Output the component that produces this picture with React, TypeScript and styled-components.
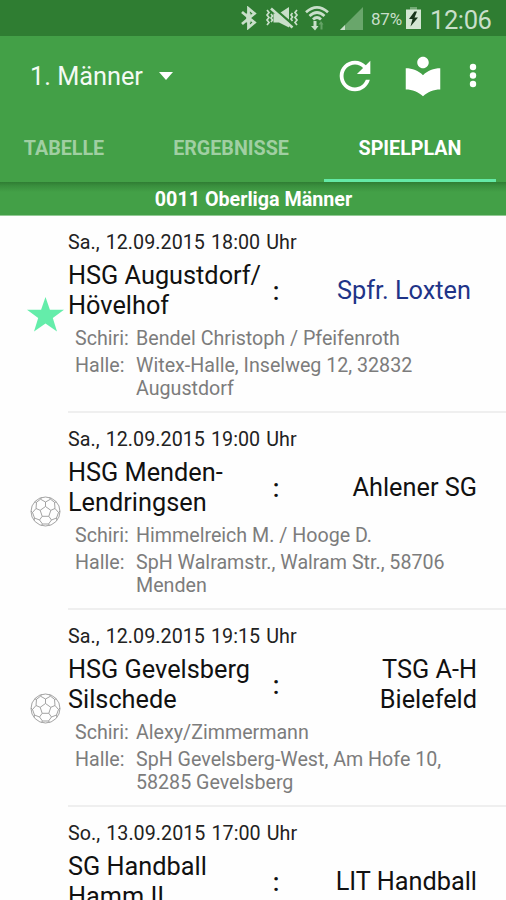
import React from "react";
import styled, { createGlobalStyle } from "styled-components";

const GlobalStyle = createGlobalStyle`
  * { box-sizing: border-box; }
  body {
    margin: 0;
    background: #fefefe;
    font-family: Roboto, "Liberation Sans", sans-serif;
    overflow: hidden;
  }
  svg { display: block; flex: none; }
`;

const Screen = styled.div`
  width: 506px;
  height: 900px;
  overflow: hidden;
  display: flex;
  flex-direction: column;
`;

const StatusBar = styled.div`
  flex: none;
  height: 36px;
  padding-left: 240px;
  background: #2f7d32;
  color: #c9dfca;
  display: flex;
  align-items: center;
`;

const BatteryText = styled.span`
  width: 35px;
  margin-left: 8px;
  padding-top: 2px;
  font-size: 17px;
  letter-spacing: -0.2px;
  white-space: nowrap;
`;

const Clock = styled.span`
  margin-left: 9px;
  padding-top: 3px;
  font-size: 25.5px;
  letter-spacing: -0.4px;
  line-height: 30px;
`;

const AppBar = styled.header`
  flex: none;
  height: 146px;
  background: #43a047;
  color: #fff;
  display: flex;
  flex-direction: column;
`;

const Toolbar = styled.div`
  flex: none;
  height: 79px;
  padding-left: 30px;
  display: flex;
  align-items: center;
`;

const TeamPicker = styled.div`
  width: 302px;
  padding-top: 1px;
  display: flex;
  align-items: center;
  gap: 16px;
  font-size: 25.3px;
  color: #f4faf4;
`;

const ToolButton = styled.div<{ $gap?: number }>`
  margin-left: ${(p) => p.$gap ?? 0}px;
`;

const Tabs = styled.nav`
  flex: 1;
  display: grid;
  grid-template-columns: 128px 196px 172px;
`;

const Tab = styled.div<{ $active?: boolean; $shift?: number }>`
  display: flex;
  align-items: center;
  justify-content: center;
  padding-top: 3px;
  padding-left: ${(p) => p.$shift ?? 0}px;
  font-size: 19.7px;
  font-weight: 700;
  color: ${(p) => (p.$active ? "#fff" : "#a0cfa2")};
  border-bottom: 3px solid ${(p) => (p.$active ? "#64e9a6" : "transparent")};
`;

const LeagueBar = styled.div`
  flex: none;
  height: 34px;
  padding: 2px 0 0 1px;
  background: linear-gradient(#2f7d33 0, #3a8f3e 4px, #43a047 10px);
  border-bottom: 1px solid #93c995;
  color: #fff;
  font-size: 19.7px;
  font-weight: 700;
  display: flex;
  align-items: center;
  justify-content: center;
`;

const MatchRow = styled.article`
  flex: none;
  height: 197px;
  display: grid;
  grid-template-columns: 68px 1fr;
`;

const Marker = styled.div<{ $inset: number }>`
  display: flex;
  align-items: center;
  justify-content: flex-end;
  padding-right: ${(p) => p.$inset}px;
`;

const MatchBody = styled.div`
  padding-top: 15px;
  border-bottom: 2px solid #efefef;
`;

const MatchDate = styled.div`
  height: 30px;
  line-height: 23px;
  font-size: 19.7px;
  letter-spacing: 0.04px;
  word-spacing: 1.1px;
  color: #222;
`;

const Teams = styled.div`
  height: 59px;
  display: grid;
  grid-template-columns: 198px 20px 191px;
  align-items: center;
  font-size: 25.3px;
  line-height: 29.5px;
  color: #111;
  white-space: pre-line;
`;

const Colon = styled.span`
  padding-top: 3px;
  text-align: center;
  font-weight: 500;
`;

const Guest = styled.span<{ $highlight?: boolean }>`
  text-align: right;
  padding-right: ${(p) => (p.$highlight ? 6 : 0)}px;
  color: ${(p) => (p.$highlight ? "#1f3488" : "inherit")};
`;

const Details = styled.dl`
  margin: 7px 0 0 7px;
  display: grid;
  grid-template-columns: 61px 1fr;
  row-gap: 4px;
  font-size: 19.65px;
  line-height: 23px;
  color: #7c7c7c;
  white-space: pre-line;
`;

const Term = styled.dt`
  margin: 0;
`;

const Value = styled.dd`
  margin: 0;
`;

const BluetoothIcon = () => (
  <svg width="18" height="24" viewBox="0 0 18 24" fill="none" stroke="currentColor" strokeWidth="2.8">
    <path d="M2 6 14.500 16.500 8.500 21.500V2.500L14.500 7.500 2 18" />
    <path d="M8.500 7.500V16.500" strokeWidth="4.500" />
  </svg>
);

const MutedIcon = () => (
  <svg width="34" height="24" viewBox="0 0 34 24" fill="none" stroke="currentColor">
    <path d="M8.500 7.500H14L24 1V21.500L14 16.500H8.500Z" fill="currentColor" stroke="none" />
    <path d="M8.500 2 30 20.500" stroke="#2f7d32" strokeWidth="2.500" />
    <path d="M6 2.500 27.500 21.500" strokeWidth="2.600" />
    <path d="M2 4l2 2.500-2 2.500 2 2.500-2 2.500 2 2.500-2 2.500M6 8l1.500 2-1.500 2 1.500 2-1.500 2M32 4l-2 2.500 2 2.500-2 2.500 2 2.500-2 2.500 2 2.500M27.500 7 26 9l1.500 2-1.500 2 1.500 2" strokeWidth="1.700" />
  </svg>
);

const WifiIcon = () => (
  <svg width="24" height="26" viewBox="0 0 24 26" fill="none" stroke="currentColor">
    <path d="M1 7.300Q12-2.500 23 7.300M4.500 11Q12 4 19.500 11M8 14.500Q12 10.500 16 14.500" strokeWidth="2.700" />
    <path d="M8.500 16v5H6L10 25.500 13.500 21H11.500v-5Z" fill="currentColor" stroke="none" />
    <path d="M15.500 24.500v-5H13.500L16 16l2.500 3.500h-1v5Z" fill="#64a366" stroke="none" />
  </svg>
);

const SignalIcon = () => (
  <svg width="23" height="23" viewBox="0 0 23 23">
    <path d="M23 0V23H0Z" fill="#69a66b" />
    <path d="M5 18V23H0Z" fill="#c9dfca" />
  </svg>
);

const BatteryIcon = () => (
  <svg width="15" height="22" viewBox="0 0 15 22">
    <path d="M4 0H11V3H4Z" fill="#72a974" />
    <path d="M0 2.500H15V22H0Z" fill="#d3e6d3" />
    <path d="M8.500 4.500 3 12H6.500L4.500 19.500 12 10.500H8.500L11 4.500Z" fill="#17351a" />
  </svg>
);

const RefreshIcon = () => (
  <svg width="46" height="46" viewBox="0 0 24 24" fill="#fff">
    <path d="M17.650 6.350C16.200 4.900 14.210 4 12 4c-4.420 0-7.990 3.580-7.990 8s3.570 8 7.990 8c3.730 0 6.840-2.550 7.730-6h-2.080c-.82 2.330-3.040 4-5.650 4-3.310 0-6-2.690-6-6s2.690-6 6-6c1.660 0 3.140.690 4.220 1.780L13 11h7V4l-2.350 2.350z" />
  </svg>
);

const LibraryIcon = () => (
  <svg width="46" height="46" viewBox="0 0 24 24" fill="#fff">
    <path d="M12 11.550C9.640 9.350 6.480 8 3 8v11c3.480 0 6.640 1.350 9 3.550 2.360-2.190 5.520-3.550 9-3.550V8c-3.480 0-6.640 1.350-9 3.550zM12 8c1.660 0 3-1.340 3-3s-1.340-3-3-3-3 1.340-3 3 1.340 3 3 3z" />
  </svg>
);

const MoreIcon = () => (
  <svg width="8" height="26" viewBox="0 0 8 26" fill="#fff">
    <circle cx="4" cy="4" r="3.200" />
    <circle cx="4" cy="12.500" r="3.200" />
    <circle cx="4" cy="21" r="3.200" />
  </svg>
);

const CaretIcon = () => (
  <svg width="14" height="8" viewBox="0 0 14 8" fill="#fff">
    <path d="M0 0H14L7 8Z" />
  </svg>
);

const StarIcon = () => (
  <svg width="37" height="35" viewBox="0 0 37 35" fill="#64edaa">
    <path d="M18.500 0 22.900 12.700H37L25.800 21 30 34.600 18.500 26.500 7 34.600 11.200 21 0 12.700H14.100Z" />
  </svg>
);

const BallIcon = () => (
  <svg width="31" height="31" viewBox="0 0 31 31" fill="none" stroke="#999" strokeWidth="0.9">
    <circle cx="15.500" cy="15.500" r="14.500" />
    <path d="M15.500 10.500 20.800 14.300 18.800 20.300H12.200L10.200 14.300ZM15.500 10.500V6M20.800 14.300 25 12.500M18.800 20.300 21.500 24M12.200 20.300 9.500 24M10.200 14.300 6 12.500" />
    <path d="M15.500 6 10.500 3.200 6.500 6.300 6 12.500 2.500 16.500 4.500 22 9.500 24 12.500 28 18.500 28 21.500 24 26.500 22 28.500 16.500 25 12.500 24.500 6.300 20.500 3.200Z" />
    <path d="M10.500 3.200 11.500 1.500M20.500 3.200 19.500 1.500M6.500 6.300 4.700 6M24.500 6.300 26.300 6M2.500 16.500 1 15M28.500 16.500 30 15M4.500 22 4 24.300M26.500 22 27 24.300M12.500 28 11.500 29.500M18.500 28 19.500 29.500" />
  </svg>
);

interface Match {
  date: string;
  home: string;
  guest: string;
  referee?: string;
  hall?: string;
  marker?: "star" | "ball";
}

const matches: Match[] = [
  {
    date: "Sa., 12.09.2015 18:00 Uhr",
    home: "HSG Augustdorf/\nHövelhof",
    guest: "Spfr. Loxten",
    referee: "Bendel Christoph / Pfeifenroth",
    hall: "Witex-Halle, Inselweg 12, 32832\nAugustdorf",
    marker: "star",
  },
  {
    date: "Sa., 12.09.2015 19:00 Uhr",
    home: "HSG Menden-\nLendringsen",
    guest: "Ahlener SG",
    referee: "Himmelreich M. / Hooge D.",
    hall: "SpH Walramstr., Walram Str., 58706\nMenden",
    marker: "ball",
  },
  {
    date: "Sa., 12.09.2015 19:15 Uhr",
    home: "HSG Gevelsberg\nSilschede",
    guest: "TSG A-H\nBielefeld",
    referee: "Alexy/Zimmermann",
    hall: "SpH Gevelsberg-West, Am Hofe 10,\n58285 Gevelsberg",
    marker: "ball",
  },
  {
    date: "So., 13.09.2015 17:00 Uhr",
    home: "SG Handball\nHamm II",
    guest: "LIT Handball",
  },
];

const MatchItem = ({ match }: { match: Match }) => (
  <MatchRow>
    <Marker $inset={match.marker === "star" ? 4 : 7}>
      {match.marker === "star" && <StarIcon />}
      {match.marker === "ball" && <BallIcon />}
    </Marker>
    <MatchBody>
      <MatchDate>{match.date}</MatchDate>
      <Teams>
        <span>{match.home}</span>
        <Colon>:</Colon>
        <Guest $highlight={match.marker === "star"}>{match.guest}</Guest>
      </Teams>
      {match.referee && (
        <Details>
          <Term>Schiri:</Term>
          <Value>{match.referee}</Value>
          <Term>Halle:</Term>
          <Value>{match.hall}</Value>
        </Details>
      )}
    </MatchBody>
  </MatchRow>
);

export default function App() {
  return (
    <Screen>
      <GlobalStyle />
      <StatusBar>
        <BluetoothIcon />
        <ToolButton $gap={7}><MutedIcon /></ToolButton>
        <ToolButton $gap={6}><WifiIcon /></ToolButton>
        <ToolButton $gap={11}><SignalIcon /></ToolButton>
        <BatteryText>87%</BatteryText>
        <BatteryIcon />
        <Clock>12:06</Clock>
      </StatusBar>
      <AppBar>
        <Toolbar>
          <TeamPicker>
            1. Männer
            <CaretIcon />
          </TeamPicker>
          <ToolButton><RefreshIcon /></ToolButton>
          <ToolButton $gap={22}><LibraryIcon /></ToolButton>
          <ToolButton $gap={23}><MoreIcon /></ToolButton>
        </Toolbar>
        <Tabs>
          <Tab>TABELLE</Tab>
          <Tab $shift={10}>ERGEBNISSE</Tab>
          <Tab $active>SPIELPLAN</Tab>
        </Tabs>
      </AppBar>
      <LeagueBar>0011 Oberliga Männer</LeagueBar>
      {matches.map((m) => (
        <MatchItem key={m.date} match={m} />
      ))}
    </Screen>
  );
}
